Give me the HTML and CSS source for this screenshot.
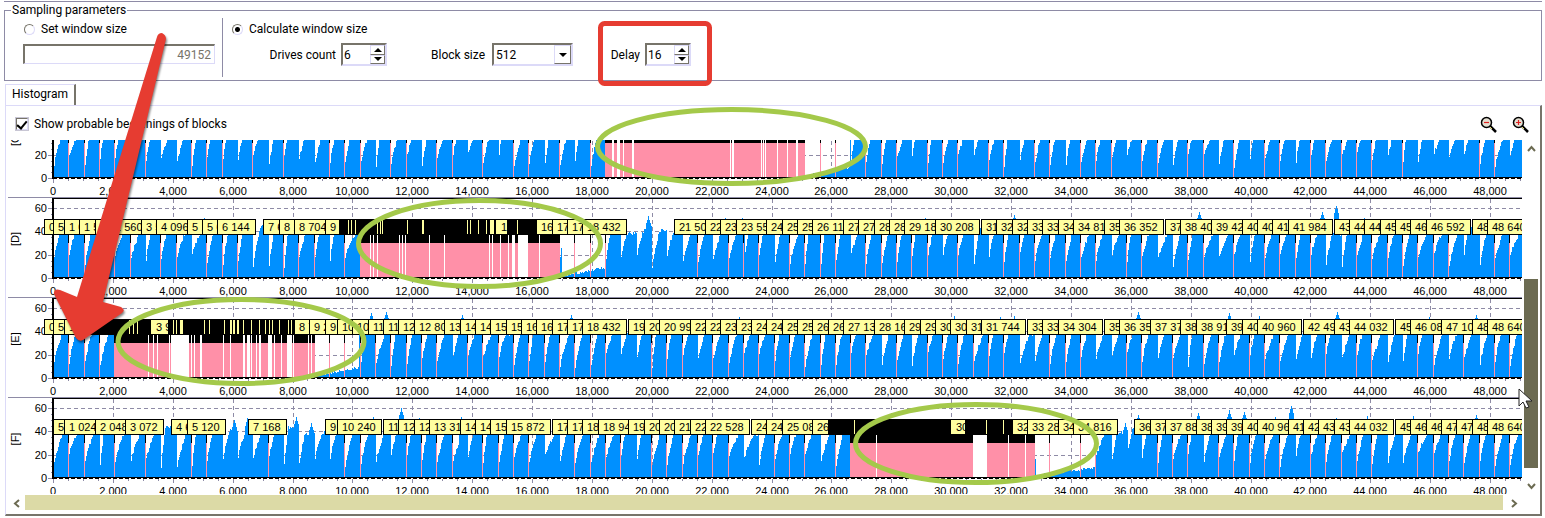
FILE: index.html
```
<!DOCTYPE html>
<html lang="en">
<head>
<meta charset="utf-8">
<title>Histogram</title>
<link rel="stylesheet" href="styles.css">
</head>
<body>
<main class="window">
  <form class="parameters">
    <fieldset class="group">
      <legend>Sampling parameters</legend>
      <div class="params">
        <div class="manual">
          <label class="choice"><input class="radio" type="radio" name="mode">Set window size</label>
          <input class="field size-field" type="text" value="49152" aria-label="Window size" disabled>
        </div>
        <div class="calculated">
          <label class="choice"><input class="radio" type="radio" name="mode" checked>Calculate window size</label>
          <div class="controls">
            <div class="control drives">
              <label for="drives">Drives count</label>
              <span class="field spinner"><input id="drives" type="text" value="6"><span class="steps"><button type="button" class="step up" aria-label="More drives"></button><button type="button" class="step down" aria-label="Fewer drives"></button></span></span>
            </div>
            <div class="control block">
              <label for="block">Block size</label>
              <span class="field combo"><select id="block"><option>512</option></select><span class="drop"></span></span>
            </div>
            <div class="control delay">
              <label for="delay">Delay</label>
              <span class="field spinner"><input id="delay" type="text" value="16"><span class="steps"><button type="button" class="step up" aria-label="Longer delay"></button><button type="button" class="step down" aria-label="Shorter delay"></button></span></span>
            </div>
          </div>
        </div>
      </div>
    </fieldset>
  </form>
  <div class="tabs"><button type="button" class="tab">Histogram</button></div>
  <section class="panel">
    <div class="toolbar">
      <label class="choice"><input class="check" type="checkbox" checked>Show probable beginnings of blocks</label>
      <div class="zooms">
        <button type="button" class="zoom" aria-label="Zoom out"><svg width="18" height="18" viewBox="0 0 18 18"><path d="M10 10l6 6" stroke="#000" stroke-width="2.500"/><path d="M10 11l2 2" stroke="#e8e070" stroke-width="1"/><circle cx="6.500" cy="6.500" r="5" fill="#e4dfd2" stroke="#000" stroke-width="1.500"/><path d="M4 6.500h5" stroke="#e02020" stroke-width="1.200"/></svg></button>
        <button type="button" class="zoom" aria-label="Zoom in"><svg width="18" height="18" viewBox="0 0 18 18"><path d="M10 10l6 6" stroke="#000" stroke-width="2.500"/><path d="M10 11l2 2" stroke="#e8e070" stroke-width="1"/><circle cx="6.500" cy="6.500" r="5" fill="#e4dfd2" stroke="#000" stroke-width="1.500"/><path d="M4 6.500h5M6.500 4v5" stroke="#e02020" stroke-width="1.200"/></svg></button>
      </div>
    </div>
    <div class="view">
      <div class="charts" id="charts"></div>
      <div class="vscroll">
        <button type="button" class="arrow" aria-label="Scroll up"><svg width="9" height="7" viewBox="0 0 9 7"><path d="M1 6l3.500-4L8 6"/></svg></button>
        <div class="vtrack"><div class="vthumb"></div></div>
        <button type="button" class="arrow" aria-label="Scroll down"><svg width="9" height="7" viewBox="0 0 9 7"><path d="M1 1l3.500 4L8 1"/></svg></button>
      </div>
    </div>
    <div class="hscroll">
      <button type="button" class="arrow" aria-label="Scroll left"><svg width="7" height="9" viewBox="0 0 7 9"><path d="M6 1L2 4.500 6 8"/></svg></button>
      <div class="hthumb"></div>
      <button type="button" class="arrow" aria-label="Scroll right"><svg width="7" height="9" viewBox="0 0 7 9"><path d="M1 1l4 3.500L1 8"/></svg></button>
    </div>
  </section>
  <svg class="marks" width="1545" height="518" viewBox="0 0 1545 518">
    <g fill="none" stroke="#a4c94a" stroke-width="5">
      <ellipse cx="731.500" cy="146.500" rx="134" ry="37"/>
      <ellipse cx="479.500" cy="243.500" rx="121" ry="43"/>
      <ellipse cx="241" cy="341.500" rx="123" ry="42"/>
      <ellipse cx="976" cy="443.500" rx="120.500" ry="39"/>
    </g>
    <rect x="600.500" y="23.500" width="109" height="60" rx="4" fill="none" stroke="#e63c31" stroke-width="5"/>
    <path class="pointer" d="M157 37Q158 33 162 33Q166 35 166 39L103 302L121 307Q126 310 122 313L83 340Q79 342 76 338L54 294Q54 288 60 290L77 297Z" fill="#e63c31"/>
    <path d="M1519 389v17l4-4 3 6 3-1-3-6h6z" fill="#fff" stroke="#222" stroke-width="1"/>
  </svg>
</main>
<script src="charts.js"></script>
</body>
</html>
```
FILE: styles.css
```
* { box-sizing: border-box; }
body { margin: 0; background: #fff; color: #000; font: 12px/16px Roboto, "Open Sans", sans-serif; }
button, input, select { font: inherit; color: inherit; }
button { border: 0; padding: 0; background: #fff; }
.window { position: relative; overflow: hidden; padding: 1px 3px 3px 4px; }
.parameters { border-top: 1px solid #8e8ba6; }
.group { margin: 0; padding: 0; border: 1px solid #8e8ba6; }
.group legend { margin-left: 6px; padding: 0 1px; }
.params { display: flex; height: 62px; }
.manual { width: 218px; padding: 3px 7px 0 18px; margin-bottom: 3px; border-right: 1px solid #8e8ba6; }
.calculated { flex: 1; padding-top: 3px; padding-left: 9px; }
.choice { display: flex; align-items: center; gap: 6px; height: 16px; }
.manual .choice { padding-left: 1px; }
.radio { appearance: none; width: 11px; height: 11px; margin: 0; border: 1px solid; border-color: #77746a #dcdaf8 #dcdaf8 #77746a; border-radius: 50%; background: #fff; }
.radio:checked { background: radial-gradient(circle, #000 0 2px, #fff 3px); }
.field { border: 2px solid; border-color: #77746a #dcdaf8 #dcdaf8 #77746a; background: #fff; }
.size-field { display: block; width: 100%; height: 20px; margin-top: 7px; padding: 0 3px; text-align: right; color: #77746a; border-right-width: 1px; border-bottom-width: 1px; }
.controls { display: flex; margin-top: 6px; }
.control { display: flex; align-items: center; gap: 5px; }
.control label { white-space: nowrap; }
.drives { width: 155px; margin-left: 0; justify-content: flex-end; }
.block { width: 186px; gap: 7px; justify-content: flex-end; }
.delay { width: 118px; justify-content: flex-end; }
.spinner { display: flex; width: 46px; height: 23px; }
.spinner input { flex: 1; min-width: 0; border: 0; padding: 0 1px; background: none; }
.steps { display: flex; flex-direction: column; width: 15px; }
.step { display: grid; flex: 1; place-items: center; border: 1px solid; border-color: #dcdaf8 #77746a #77746a #dcdaf8; }
.step::after, .drop::after { content: ""; border: 4px solid transparent; border-width: 0 4px 4px; border-bottom-color: #000; }
.step.down::after, .drop::after { border-width: 4px 4px 0; border-top-color: #000; }
.combo { position: relative; width: 81px; height: 23px; }
.combo select { appearance: none; display: block; width: 100%; height: 100%; border: 0; padding: 0 2px; background: none; }
.drop { position: absolute; inset: 0 0 0 auto; display: grid; place-items: center; width: 17px; border: 1px solid; border-color: #dcdaf8 #77746a #77746a #dcdaf8; background: #fff; pointer-events: none; }
.tabs { display: flex; margin: 3px 0 0 1px; }
.tab { height: 21px; padding: 0 6px 2px; border: 1px solid #dcdaf8; border-right: 2px solid #77746a; border-bottom: 0; }
.panel { margin-left: 1px; border: 1px solid #dcdaf8; border-right: 2px solid #77746a; border-bottom: 2px solid #77746a; padding: 0 0 3px 2px; }
.toolbar { display: flex; justify-content: space-between; height: 34px; padding: 10px 10px 0 8px; }
.check { appearance: none; width: 12px; height: 12px; margin: 0; border: 1px solid; border-color: #77746a #dcdaf8 #dcdaf8 #77746a; outline: 1px solid #c8c6d4; display: grid; place-items: center; }
.check:checked::after { content: ""; width: 4px; height: 8px; margin-bottom: 3px; border: solid #000; border-width: 0 2px 2px 0; rotate: 40deg; }
.zooms { display: flex; gap: 14px; }
.zoom { width: 18px; height: 18px; }
.view { display: flex; height: 354px; }
.charts { flex: 1; overflow: hidden; }
.chart { display: block; font: 11px "Liberation Sans", Arial, sans-serif; }
.vscroll { display: flex; flex-direction: column; width: 17px; margin-left: 1px; }
.arrow { display: grid; place-items: center; width: 16px; height: 16px; }
.arrow path { fill: none; stroke: #6c6b52; stroke-width: 2; }
.vtrack { display: flex; flex: 1; flex-direction: column; justify-content: flex-end; padding-bottom: 10px; }
.vthumb { height: 189px; background: #6c6b52; width: 14px; margin-left: 1px; }
.hscroll { display: flex; margin-top: 1px; padding-right: 18px; }
.hthumb { flex: 1; height: 15px; background: #dcdaa6; margin: 0 3px 0 1px; }
.marks { position: absolute; top: 0; left: 0; pointer-events: none; }
.pointer { filter: drop-shadow(1px 2px 1px rgba(0, 0, 0, .5)); }
```
FILE: charts.js
```
// Plot geometry: 0 is at x = 53, one 512-sector block is 15.33px wide.
const X0 = 53, STEP = 15.33, BASE = 81, UNIT = 7 / 6, END = 1522;
const xOf = k => Math.round(X0 + STEP * k);
const third = (x0, pairs) => pairs.map(([a, b]) => [x0 + a / 3, x0 + b / 3]);

const rows = [
  { name: "C", top: 43, height: 57, seed: 3,
    starts: [1,2,3,4,5,6,9,10,11,13,15,18,19,20,22,23,25,26,28,30,31,33,35,50,51,53,54,55,57,58,59,61,62,64,65,67,68,69,71,72,74,75,77,79,80,82,83,84,85,86,88,93,94],
    dense: [605, 805], low: [805, 850], peaks: [],
    gaps: third(580, [[96,102],[111,120],[129,132],[155,161],[450,453],[456,461],[543,546],[549,551],[556,560],[591,594],[622,624],[648,654]]) },
  { name: "D", top: 0, height: 100, seed: 11,
    starts: [0,1,2,3,4,5,7,8,10,11,12,15,16,17,19,33,34,35,36,42,44,45,46,48,49,50,51,53,54,55,56,57,59,62,63,64,65,66,67,68,70,71,74,75,77,79,80,81,82,85,86,87,88,89,90,91,94,95],
    dense: [360, 560], low: [562, 605], band: [339, 538], part: [496, 507, "15 360"],
    peaks: [[204,51],[648,53],[725,51],[742,51],[925,51],[1014,54],[1199,57],[1243,50],[1322,57],[1336,62],[1364,51]],
    gaps: third(320, [[150,152],[159,161],[172,174],[236,238],[245,248],[254,256],[326,328],[373,377],[507,509],[515,517],[539,541],[563,565],[576,586],[595,626],[656,659]]),
    slits: third(320, [[50,54],[84,86],[93,95],[105,108],[170,172],[179,182],[187,190],[262,264],[307,312],[441,443],[450,452],[475,477],[499,502],[511,523],[592,594]]) },
  { name: "E", top: 0, height: 100, seed: 23,
    starts: [0,1,2,3,17,18,19,20,21,22,23,24,25,27,28,29,30,31,32,33,34,35,36,39,40,41,43,44,45,46,47,48,49,50,51,52,53,55,57,58,59,60,61,62,65,66,67,70,71,73,75,76,78,79,80,83,85,86,89,90,92,94,95],
    dense: [114, 315], low: [315, 359], band: [80, 295], part: [151, 168, "3 968"],
    peaks: [[371,56],[386,57],[462,54],[571,54],[739,52],[954,53],[1000,52],[1014,53],[1138,57],[1229,56],[1259,53],[1337,57],[1429,52],[1476,54]],
    gaps: third(0, [[444,446],[459,463],[471,473],[507,509],[512,562],[565,567],[574,576],[583,585],[600,605],[669,673],[690,694],[730,735],[741,749],[754,756],[768,770],[777,782],[803,815],[822,824],[842,844],[862,877],[880,882],[925,927],[933,936]]),
    slits: third(0, [[388,390],[400,402],[411,413],[520,523],[529,532],[541,549],[612,614],[628,632],[673,677],[690,696],[700,706],[712,718],[730,732],[754,757],[776,780],[796,799],[806,808],[816,820],[838,842],[864,868],[874,877]]) },
  { name: "F", top: 0, height: 97, seed: 37,
    starts: [1,2,4,6,9,10,14,19,20,23,24,25,26,28,29,30,31,34,35,36,37,39,40,41,42,43,44,47,48,49,51,64,65,67,68,72,73,74,76,77,78,79,80,82,83,84,85,86,89,90,91,92,93,94,95],
    dense: [850, 1035], low: [1036, 1095], band: [828, 1012], part: [951, 965, "30 720"],
    peaks: [[234,50],[247,51],[296,52],[311,47],[373,52],[401,60],[419,51],[461,52],[1125,47],[1138,54],[1198,56],[1229,58],[1244,57],[1275,52],[1291,62],[1336,51],[1367,53],[1413,53],[1476,54]],
    gaps: third(770, [[318,320],[609,650],[715,717],[765,767]]),
    slits: third(770, [[253,255],[649,651],[700,702]]) }
];

function random(seed) {
  let s = seed;
  return () => (s = (s * 16807) % 2147483647) / 2147483647;
}
const rect = (x, y, w, h, fill) => `<rect x="${Math.round(x)}" y="${y}" width="${Math.max(1, Math.round(w))}" height="${h}" fill="${fill}"/>`;
const line = (x1, y1, x2, y2, color, dash = "") => `<path d="M${x1} ${y1}L${x2} ${y2}" stroke="${color}"${dash && ` stroke-dasharray="${dash}"`}/>`;
const spaced = v => String(v).replace(/\B(?=(\d{3})$)/, " ");

function flag(left, label, width) {
  return `<rect x="${Math.round(left) + .5}" y="22.5" width="${Math.round(width)}" height="15" fill="#ffffa0" stroke="#000"/><text x="${Math.round(left) + 5}" y="34">${label}</text>`;
}

// Blue area: every block rises from a low start to a plateau.
function histogram(row) {
  const rnd = random(row.seed * 7919);
  let d = "";
  for (let k = 0; k < 97; k++) {
    const from = xOf(k), to = xOf(k + 1);
    const start = 10 + rnd() * 12, rise = 4 + rnd() * 6, top = 38 + rnd() * 7;
    for (let x = from + 1; x <= to && x < END; x++) {
      if (x >= row.dense[0] && x < row.dense[1]) continue;
      const t = Math.min(1, (x - from - 1) / rise);
      let h = start + (top - start) * Math.pow(t, .8) + rnd() * 3 - 2;
      if (x >= row.low[0] && x < row.low[1]) h = 1 + 7 * (x - row.low[0]) / (row.low[1] - row.low[0]) + rnd() * 2;
      for (const [px, ph] of row.peaks) if (Math.abs(x - px) < 3) h = Math.max(h, ph - Math.abs(x - px) * 3);
      const y = Math.round(BASE - h * UNIT);
      d += `M${x} ${y}h1V80h-1z`;
    }
  }
  return `<path d="${d}" fill="#0090ff"/>`;
}

function draw(row) {
  const gray = "#8e8ba6";
  let s = line(8, .5, END, .5, gray) + line(X0, 1.5, END, 1.5, "#000");
  for (const v of [60, 40, 20]) s += line(X0, Math.round(BASE - v * UNIT) + .5, END, Math.round(BASE - v * UNIT) + .5, gray, "4 3");
  for (let v = 2000; v < 49000; v += 2000) { const x = Math.round(X0 + v * .02994) + .5; s += line(x, 2, x, 80, gray, "4 3"); }
  s += histogram(row);
  const [a, b] = row.dense;
  s += rect(a, 38, b - a, 8, "#000") + rect(a, 46, b - a, 34, "#ff90a8");
  for (const [g, h] of row.gaps) s += rect(g, 38, h - g, 42, "#fff");
  for (const k of row.starts) if (k) s += rect(xOf(k), 38, 1, 8, "#000") + rect(xOf(k), 46, 1, 34, "#ff90a8");
  s += rect(52, 1, 2, 81, "#000") + line(X0, 80.5, END, 80.5, "#000") + line(X0, 81.5, END, 81.5, "#000", "4 2");
  for (let v = 0; v <= 65; v += 5) { const y = Math.round(BASE - v * UNIT) + .5; s += line(v % 20 ? 51 : 48, y, 52, y, gray); }
  for (let v = 0; v < 49001; v += 500) { const x = Math.round(X0 + v * .02994) + .5; s += line(x, 82, x, v % 2000 ? 84 : 86, gray); }
  for (const v of [0, 20, 40, 60]) s += `<text x="47" y="${Math.round(BASE - v * UNIT) + 4}" text-anchor="end">${v}</text>`;
  for (let v = 0; v < 49000; v += 2000) s += `<text x="${Math.round(X0 + v * .02994)}" y="98" text-anchor="middle">${v.toLocaleString("en-US")}</text>`;
  s += `<text transform="translate(19 42) rotate(-90)" text-anchor="middle">[${row.name}]</text>`;
  if (row.band) {
    const flags = row.starts.map(k => {
      const label = spaced(k * 512), digits = String(k * 512).length;
      const width = digits * 6 + (digits > 3 ? 3 : 0) + 11;
      return [X0 + STEP * k - width / 2 - .5, label, width];
    });
    const [from, to] = row.band;
    s += flags.filter(f => f[0] < from).map(f => flag(...f)).join("");
    s += rect(from, 22, to - from + 1, 16, "#000");
    for (const [g, h] of row.slits) s += rect(g, 23, h - g, 14, "#ffffa0");
    const [l, r, text] = row.part;
    s += `<svg x="${l}" y="22" width="${r - l}" height="16"><rect y="1" width="60" height="14" fill="#ffffa0"/><text x="5" y="12">${text}</text></svg>`;
    s += flags.filter(f => f[0] >= from).map(f => flag(...f)).join("");
  }
  return `<svg class="chart" width="1514" height="${row.height}" viewBox="8 ${row.top} 1514 ${row.height}" shape-rendering="crispEdges">${s}</svg>`;
}

document.getElementById("charts").innerHTML = rows.map(draw).join("");
```
